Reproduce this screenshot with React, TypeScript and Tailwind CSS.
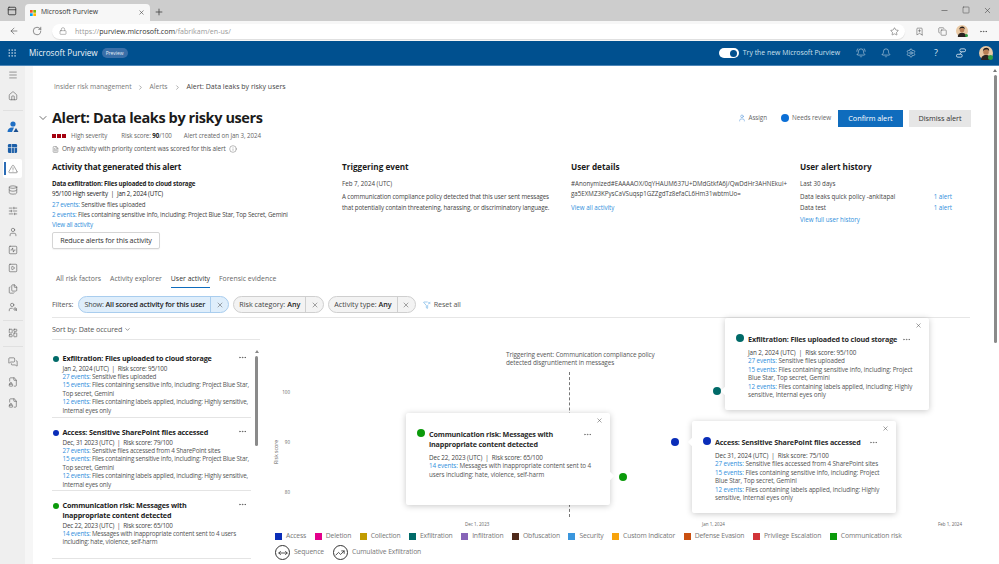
import React from 'react';
import {
  ArrowLeft, RotateCw, Lock, Plus, X, Minus, Square, Star, MoreHorizontal, Menu, Home,
  TriangleAlert, Database, SlidersHorizontal, User, SquareActivity, SquarePlay, Files, UserSearch, LayoutDashboard,
  MessagesSquare, FileLock2, ChevronDown, ChevronRight, Grip, BellRing, Bell, Settings,
  Info, FileText, FilterX, PanelTop, BookmarkPlus, Copy, MoveHorizontal, TrendingUp,
} from 'lucide-react';

const Avatar = ({ size, badge }: { size: string; badge: string }) => (
  <div className={`relative shrink-0 ${size}`}>
    <svg viewBox="0 0 20 20" className="w-full h-full">
      <circle cx="10" cy="10" r="10" fill="#e9c9a4" />
      <path d="M3 20c0-5 3-7 7-7s7 2 7 7z" fill="#2a2320" />
      <circle cx="10" cy="8.5" r="4" fill="#b97f55" />
      <path d="M5.500 8c0-4 2.500-5.500 5-5.500s4.500 1.500 4 5c-1-2-2-2.500-4.500-2.500s-3.500 1-4.500 3z" fill="#221a16" />
    </svg>
    <span className={`absolute right-0 bottom-0 rounded-full bg-[#2f9e44] ${badge}`} />
  </div>
);

const sideMid = [
  { Icon: Database, m: 'mt-[7px]' },
  { Icon: SlidersHorizontal, m: 'mt-[11px]' },
  { Icon: User, m: 'mt-[11px]' },
  { Icon: SquareActivity, m: 'mt-[8px]' },
  { Icon: SquarePlay, m: 'mt-[8px]' },
  { Icon: Files, m: 'mt-[11px]' },
  { Icon: UserSearch, m: 'mt-[8px]' },
];

const Sidebar = () => (
  <aside className="w-[25px] shrink-0 bg-[#efefef] flex flex-col items-center pt-[4px] text-[#555]">
    <Menu className="w-[10px] h-[10px]" strokeWidth={1.4} />
    <Home className="w-[10px] h-[10px] mt-[11px]" strokeWidth={1.4} />
    <div className="w-[20px] h-px bg-[#e0e0e0] mt-[9px]" />
    <svg viewBox="0 0 12 12" className="w-[12px] h-[12px] mt-[10px]">
      <circle cx="6" cy="3" r="2.600" fill="#1f6fc4" />
      <path d="M0.500 11c0-3 2-4.500 4.500-4.500h2l-2 4.500z" fill="#1f6fc4" />
      <path d="M6.500 11l2.500-4 2.500 4z" fill="#1a4f8f" />
    </svg>
    <svg viewBox="0 0 12 12" className="w-[11px] h-[11px] mt-[10px]">
      <rect x="1" y="1" width="10" height="10" rx="1.500" fill="#1a5ea8" />
      <path d="M5 1v10M1 5h10M8 5v6" stroke="#efefef" strokeWidth="0.700" />
    </svg>
    <div className="mt-[5px] w-[19px] h-[19px] bg-white rounded-[2px] relative flex items-center justify-center">
      <span className="absolute left-[1px] top-[3px] bottom-[3px] w-[1.500px] bg-[#2b6cb5]" />
      <TriangleAlert className="w-[10px] h-[10px]" strokeWidth={1.3} />
    </div>
    {sideMid.map(({ Icon, m }, i) => (
      <Icon key={i} className={`w-[10px] h-[10px] ${m}`} strokeWidth={1.4} />
    ))}
    <div className="w-[20px] h-px bg-[#e0e0e0] mt-[8px]" />
    <LayoutDashboard className="w-[10px] h-[10px] mt-[7px]" strokeWidth={1.4} />
    <div className="w-[20px] h-px bg-[#e0e0e0] mt-[8px]" />
    <MessagesSquare className="w-[10px] h-[10px] mt-[10px]" strokeWidth={1.4} />
    <FileLock2 className="w-[10px] h-[10px] mt-[10px]" strokeWidth={1.4} />
    <FileLock2 className="w-[10px] h-[10px] mt-[11px]" strokeWidth={1.4} />
  </aside>
);

const Ev = ({ n }: { n: number }) => <span className="text-[#2f8fdc]">{n} events: </span>;

const Pill = ({ label, value, active }: { label: string; value: string; active?: boolean }) => (
  <div className={`h-[17px] flex items-center rounded-full border text-[7.200px] ${active ? 'tracking-[-0.150px] bg-[#dfeefb] border-[#a9cdee]' : 'tracking-normal bg-[#f3f3f3] border-[#cfcfcf]'}`}>
    <span className="pl-[5px] pr-[5px] text-[#444] whitespace-nowrap">{label} <b className="font-semibold text-[#222]">{value}</b></span>
    <span className={`h-full w-[18px] flex items-center justify-center border-l ${active ? 'border-[#a9cdee]' : 'border-[#cfcfcf]'}`}>
      <X className="w-[8px] h-[8px] text-[#444]" strokeWidth={1.4} />
    </span>
  </div>
);

const items = [
  {
    dot: 'bg-[#006a68]', title: ['Exfiltration: Files uploaded to cloud storage'], meta: 'Jan 2, 2024 (UTC)  |  Risk score: 95/100',
    rows: [[27, 'Sensitive files uploaded'], [15, 'Files containing sensitive info, including: Project Blue Star, Top secret, Gemini'], [12, 'Files containing labels applied, including: Highly sensitive, Internal eyes only']],
  },
  {
    dot: 'bg-[#0a2db8]', title: ['Access: Sensitive SharePoint files accessed'], meta: 'Dec, 31 2023 (UTC)  |  Risk score: 79/100',
    rows: [[27, 'Sensitive files accessed from 4 SharePoint sites'], [15, 'Files containing sensitive info, including: Project Blue Star, Top secret, Gemini'], [12, 'Files containing labels applied, including: Highly sensitive, Internal eyes only']],
  },
  {
    dot: 'bg-[#0b9a0b]', title: ['Communication risk: Messages with', 'inappropriate content detected'], meta: 'Dec 22, 2023 (UTC)  |  Risk score: 65/100',
    rows: [[14, 'Messages with inappropriate content sent to 4 users including: hate, violence, self-harm']],
  },
] as const;

const ListItem = ({ item, h }: { item: (typeof items)[number]; h: string }) => (
  <div className={`flex border-b border-[#e4e4e4] pt-[3px] ${h}`}>
    <span className={`w-[6px] h-[6px] rounded-full mt-[3px] ml-[1px] mr-[3.500px] shrink-0 ${item.dot}`} />
    <div className="flex-1 min-w-0">
      <div className="flex justify-between">
        <div className="text-[7.200px] tracking-[-0.150px] leading-[10px] font-bold text-[#1b1b1b] whitespace-nowrap">
          {item.title.map((t) => <div key={t}>{t}</div>)}
        </div>
        <MoreHorizontal className="w-[9px] h-[9px] mr-[4px] text-[#444] shrink-0" strokeWidth={1.5} />
      </div>
      <div className="text-[6.300px] tracking-[-0.190px] leading-[8.400px] text-[#555] mt-[1.500px]">
        <div className="text-[#444] whitespace-pre">{item.meta}</div>
        {item.rows.map(([n, t]) => <div key={n}><Ev n={n} />{t}</div>)}
      </div>
    </div>
  </div>
);

const Popover = ({ pos, item, meta, arrow }: { pos: string; item: (typeof items)[number]; meta: string; arrow: string }) => (
  <div className={`absolute w-[204px] h-[92px] bg-white rounded-[2px] shadow-[0_1px_6px_rgba(0,0,0,0.22)] ${pos}`}>
    <span className={`absolute w-[6px] h-[6px] bg-white rotate-45 ${arrow}`} />
    <X className="absolute right-[7px] top-[4px] w-[7px] h-[7px] text-[#444]" strokeWidth={1.6} />
    <span className={`absolute left-[11px] top-[16px] w-[8px] h-[8px] rounded-full ${item.dot}`} />
    <MoreHorizontal className="absolute right-[18px] top-[17px] w-[9px] h-[9px] text-[#555]" strokeWidth={1.4} />
    <div className="absolute left-[23px] top-[16px] right-[10px]">
      <div className="text-[7.200px] tracking-[-0.150px] leading-[10px] font-bold text-[#2a2a2a] whitespace-nowrap">
        {item.title.map((t) => <div key={t}>{t}</div>)}
      </div>
      <div className="text-[6.300px] tracking-[-0.100px] leading-[8.400px] text-[#555] mt-[5px]">
        <div className="whitespace-pre text-[#444]">{meta}</div>
        {item.rows.map(([n, t]) => <div key={n}><Ev n={n} />{t}</div>)}
      </div>
    </div>
  </div>
);

const legend = [
  ['Access', 'bg-[#0a2db8]'], ['Deletion', 'bg-[#e3008c]'], ['Collection', 'bg-[#c19c00]'], ['Exfiltration', 'bg-[#006a68]'],
  ['Infiltration', 'bg-[#8764b8]'], ['Obfuscation', 'bg-[#4f2a1a]'], ['Security', 'bg-[#3a96dd]'], ['Custom Indicator', 'bg-[#f7a30c]'],
  ['Defense Evasion', 'bg-[#ca5010]'], ['Privilege Escalation', 'bg-[#d13438]'], ['Communication risk', 'bg-[#0b9a0b]'],
];

const Chart = () => (
  <div className="relative flex-1 h-full">
    {/* canvas origin: x 262, y 319 */}
    <span className="absolute left-[3px] top-[130px] text-[5.200px] text-[#555] -rotate-90 origin-center whitespace-nowrap">Risk score</span>
    {[['100', 'top-[71px]'], ['90', 'top-[121px]'], ['80', 'top-[171px]']].map(([t, p]) => (
      <span key={t} className={`absolute left-[18px] w-[10px] text-right text-[4.500px] leading-[6px] text-[#666] ${p}`}>{t}</span>
    ))}
    <div className="absolute left-[244px] top-[33px] text-[6.400px] tracking-[-0.100px] leading-[8.400px] text-[#555] whitespace-nowrap">
      <div>Triggering event: Communication compliance policy</div>
      <div>detected disgruntlement in messages</div>
    </div>
    <div className="absolute left-[307px] top-[54px] h-[145px] border-l border-dashed border-[#777]" />
    <span className="absolute left-[451px] top-[69px] w-[8px] h-[8px] rounded-full bg-[#006a68]" />
    <span className="absolute left-[409px] top-[120px] w-[8px] h-[8px] rounded-full bg-[#0a2db8]" />
    <span className="absolute left-[357px] top-[155px] w-[8px] h-[8px] rounded-full bg-[#0b9a0b]" />
    {[['Dec 1, 2023', 'left-[203px]'], ['Jan 1, 2024', 'left-[440px]'], ['Feb 1, 2024', 'left-[676px]']].map(([t, p]) => (
      <span key={t} className={`absolute top-[203px] text-[4.500px] leading-[6px] text-[#666] whitespace-nowrap ${p}`}>{t}</span>
    ))}
    <Popover pos="left-[144px] top-[95px]" item={items[2]} meta="Dec 22, 2023 (UTC)  |  Risk score: 65/100" arrow="-right-[3px] top-[60px]" />
    <Popover pos="left-[463px] top-[0px]" item={items[0]} meta="Jan 2, 2024 (UTC)  |  Risk score: 95/100" arrow="-left-[3px] top-[70px]" />
    <Popover pos="left-[430px] top-[103px]" item={items[1]} meta="Dec 31, 2024 (UTC)  |  Risk score: 75/100" arrow="-left-[3px] top-[18px]" />
    <div className="absolute left-[13px] top-[213px] flex gap-[8.500px] text-[6.800px] tracking-[-0.150px] leading-[10px] text-[#777] whitespace-nowrap">
      {legend.map(([t, c]) => (
        <div key={t} className="flex items-center gap-[4px]">
          <span className={`w-[7px] h-[7px] ${c}`} />{t}
        </div>
      ))}
    </div>
    <div className="absolute left-[13px] top-[227px] flex items-center text-[6.800px] tracking-[-0.120px] text-[#777] whitespace-nowrap">
      <span className="w-[15px] h-[15px] rounded-full border-[1.500px] border-[#333] flex items-center justify-center mr-[4px]"><MoveHorizontal className="w-[10px] h-[10px] text-[#333]" /></span>
      Sequence
      <span className="w-[15px] h-[15px] rounded-full border-[1.500px] border-[#333] flex items-center justify-center ml-[9px] mr-[4px]"><TrendingUp className="w-[10px] h-[10px] text-[#333]" /></span>
      Cumulative Exfiltration
    </div>
  </div>
);

export default function App() {
  return (
    <div className="w-[999px] h-[564px] overflow-hidden flex flex-col bg-white font-['Open_Sans',sans-serif]">
      {/* Browser chrome */}
      <div className="h-[21px] bg-[#cdcdcd] flex items-end pl-[7px] shrink-0">
        <PanelTop className="w-[10px] h-[10px] mb-[5px] text-[#333]" />
        <div className="ml-[8px] w-[125px] h-[17px] bg-[#f7f7f7] rounded-t-[4px] flex items-center pl-[5px] pr-[5px]">
          <svg viewBox="0 0 10 10" className="w-[6px] h-[6px] mr-[5px]">
            <rect width="4.500" height="4.500" fill="#f25022" /><rect x="5.500" width="4.500" height="4.500" fill="#7fba00" />
            <rect y="5.500" width="4.500" height="4.500" fill="#00a4ef" /><rect x="5.500" y="5.500" width="4.500" height="4.500" fill="#ffb900" />
          </svg>
          <span className="text-[6.800px] text-[#333]">Microsoft Purview</span>
          <X className="w-[7px] h-[7px] ml-auto text-[#444]" />
        </div>
        <Plus className="w-[10px] h-[10px] ml-[4px] mb-[4px] text-[#444]" />
        <div className="ml-auto flex gap-[13px] mb-[6px] mr-[7px] text-[#444]">
          <Minus className="w-[9px] h-[9px]" strokeWidth={1.5} />
          <Square className="w-[8px] h-[8px]" strokeWidth={1.5} />
          <X className="w-[9px] h-[9px]" strokeWidth={1.5} />
        </div>
      </div>
      <div className="h-[20px] bg-[#f7f7f7] flex items-center pl-[9px] pr-[8px] text-[#444] shrink-0">
        <ArrowLeft className="w-[10px] h-[10px]" strokeWidth={1.4} />
        <RotateCw className="w-[10px] h-[10px] ml-[13px]" strokeWidth={1.4} />
        <div className="ml-[10px] w-[853px] h-[15px] bg-white rounded-full flex items-center pl-[7px] pr-[6px] shadow-[0_1px_1px_rgba(0,0,0,0.1)]">
          <Lock className="w-[8px] h-[8px] text-[#777]" strokeWidth={1.5} />
          <span className="ml-[8px] text-[7.100px] text-[#999]">https://<b className="font-medium text-[#333]">purview.microsoft.com</b>/fabrikam/en-us/</span>
          <Star className="w-[9px] h-[9px] ml-auto" strokeWidth={1.3} />
        </div>
        <BookmarkPlus className="w-[9px] h-[9px] ml-[10px]" strokeWidth={1.3} />
        <Copy className="w-[9px] h-[9px] ml-[14px]" strokeWidth={1.3} />
        <Avatar size="w-[12px] h-[12px] ml-[9px]" badge="w-[3px] h-[3px]" />
        <MoreHorizontal className="w-[9px] h-[9px] ml-[11px]" strokeWidth={1.6} />
      </div>
      {/* Purview header */}
      <div className="h-[25px] bg-[#00508f] border-b border-[#4d86b8] flex items-center pl-[7px] pr-[6px] text-white shrink-0">
        <Grip className="w-[10px] h-[10px] text-[#d5e3ef]" strokeWidth={1.4} />
        <span className="ml-[12px] text-[8.200px] font-medium text-[#eef4f9]">Microsoft Purview</span>
        <span className="ml-[4px] px-[4px] h-[10px] rounded-full bg-[#3a6fa8] text-[4.900px] leading-[10px] text-[#e5eef6]">Preview</span>
        <div className="ml-auto w-[20px] h-[10px] bg-white rounded-full flex items-center justify-end pr-[1.500px]">
          <span className="w-[7px] h-[7px] rounded-full bg-[#00508f]" />
        </div>
        <span className="ml-[4px] text-[6.900px] text-[#cfe0ee]">Try the new Microsoft Purview</span>
        <div className="ml-[16px] flex items-center gap-[15px] text-[#dbe7f1]">
          <BellRing className="w-[10px] h-[10px]" strokeWidth={1.3} />
          <Bell className="w-[10px] h-[10px]" strokeWidth={1.3} />
          <Settings className="w-[10px] h-[10px]" strokeWidth={1.3} />
          <span className="w-[10px] text-center text-[9px] leading-[10px]">?</span>
          <svg viewBox="0 0 12 12" className="w-[10px] h-[10px]" fill="none" stroke="currentColor" strokeWidth="1">
            <rect x="4.500" y="1" width="7" height="3.500" rx="1.750" />
            <rect x="0.500" y="7.500" width="7" height="3.500" rx="1.750" />
            <path d="M7 4.500l-2.500 3" />
          </svg>
        </div>
        <Avatar size="w-[14px] h-[14px] ml-[13px]" badge="w-[5px] h-[5px]" />
      </div>

      <div className="flex-1 flex min-h-0 bg-[#f6f6f6]">
        <Sidebar />
        <main className="ml-[8px] flex-1 min-w-0 bg-white pl-[19px] relative overflow-hidden">
          {/* page scrollbar */}
          <div className="absolute right-[2px] top-[3px] bottom-[1px] w-[4px] flex flex-col items-center">
            <span className="w-0 h-0 border-x-[2px] border-x-transparent border-b-[3px] border-b-[#777]" />
            <span className="mt-[3px] w-[3px] h-[268px] bg-[#8a8a8a] rounded-full" />
          </div>

          <div className="flex items-center h-[10px] mt-[16px] text-[6.700px] text-[#777]">
            <span className="ml-[2px]">Insider risk management</span>
            <ChevronRight className="w-[7px] h-[7px] mx-[5px]" />
            <span className="ml-[1px]">Alerts</span>
            <ChevronRight className="w-[7px] h-[7px] mx-[6px]" />
            <span className="text-[#444] font-medium text-[7px]">Alert: Data leaks by risky users</span>
          </div>

          <div className="flex items-center h-[20px] mt-[16px] pr-[28px] relative">
            <ChevronDown className="absolute -left-[15px] w-[12px] h-[12px] text-[#333]" strokeWidth={1.4} />
            <h1 className="text-[14.500px] tracking-[-0.400px] leading-[20px] font-bold text-[#1b1b1b]">Alert: Data leaks by risky users</h1>
            <div className="ml-auto flex items-center text-[6.300px] tracking-[-0.050px] text-[#666]">
              <User className="w-[8px] h-[8px] text-[#4a8fd6]" strokeWidth={1.5} />
              <span className="ml-[2px]">Assign</span>
              <span className="ml-[14px] w-[8px] h-[8px] rounded-full bg-[#0b6fd6]" />
              <span className="ml-[3px]">Needs review</span>
              <button className="ml-[7px] w-[65px] h-[17px] bg-[#0f6cbd] text-white text-[7.300px]">Confirm alert</button>
              <button className="ml-[6px] w-[62px] h-[17px] bg-[#e6e6e6] text-[#333] text-[7.300px]">Dismiss alert</button>
            </div>
          </div>

          <div className="flex items-center mt-[3px] h-[10px] text-[6.200px] tracking-[-0.080px] text-[#666]">
            <span className="flex gap-[1px] mr-[5px]">
              <i className="w-[4px] h-[4px] bg-[#a4000f]" /><i className="w-[4px] h-[4px] bg-[#a4000f]" /><i className="w-[4px] h-[4px] bg-[#a4000f]" />
            </span>
            <span>High severity</span>
            <span className="ml-[14px]">Risk score: <b className="text-[#222]">90</b>/100</span>
            <span className="ml-[12px]">Alert created on Jan 3, 2024</span>
          </div>
          <div className="flex items-center mt-[3px] h-[10px] text-[6.400px] tracking-[-0.130px] text-[#555]">
            <FileText className="w-[7px] h-[7px] mr-[3px]" strokeWidth={1.4} />
            <span>Only activity with priority content was scored for this alert</span>
            <Info className="w-[8px] h-[8px] ml-[3px]" strokeWidth={1.2} />
          </div>

          {/* Summary columns */}
          <div className="grid grid-cols-[290px_229px_229px_1fr] mt-[7px] h-[83px] text-[6.200px] leading-[10.300px] text-[#444]">
            <div className="tracking-[-0.150px]">
              <h2 className="text-[8.200px] leading-[12px] font-bold text-[#1b1b1b] mb-[6px]">Activity that generated this alert</h2>
              <div className="font-bold text-[#222]">Data exfiltration: Files uploaded to cloud storage</div>
              <div className="font-medium text-[#222] whitespace-pre">95/100 High severity  |  Jan 2, 2024 (UTC)</div>
              <div><span className="text-[#2f8fdc]">27 events:</span> Sensitive files uploaded</div>
              <div><span className="text-[#2f8fdc]">2 events:</span> Files containing sensitive info, including: Project Blue Star, Top Secret, Gemini</div>
              <div className="text-[#2f8fdc]">View all activity</div>
              <button className="mt-[2px] w-[108px] h-[17px] border border-[#d5d5d5] rounded-[2px] text-[7.200px] leading-[15px] font-medium text-[#333] shadow-[0_1px_1px_rgba(0,0,0,0.05)]">Reduce alerts for this activity</button>
            </div>
            <div>
              <h2 className="text-[8.200px] leading-[12px] font-bold text-[#1b1b1b] mb-[6px]">Triggering event</h2>
              <div className="mb-[3px]">Feb 7, 2024 (UTC)</div>
              <div className="w-[210px] tracking-[-0.100px]">A communication compliance policy detected that this user sent messages that potentially contain threatening, harassing, or discriminatory language.</div>
            </div>
            <div>
              <h2 className="text-[8.200px] leading-[12px] font-bold text-[#1b1b1b] mb-[6px]">User details</h2>
              <div className="whitespace-nowrap">#Anonymized#EAAAAOX/0qYHAUM637U+DMdGtkfA6J/QwDdHr3AHNEkui+</div>
              <div className="whitespace-nowrap">ga5EXMZ3KPysCaVSuqsp1GZZgdTz8efaCL6Hm31wbtmUo=</div>
              <div className="text-[#2f8fdc] mt-[3px]">View all activity</div>
            </div>
            <div className="pr-[47px]">
              <h2 className="text-[8.200px] leading-[12px] font-bold text-[#1b1b1b] mb-[6px]">User alert history</h2>
              <div className="mb-[3px]">Last 30 days</div>
              <div className="flex justify-between"><span>Data leaks quick policy -ankitapal</span><span className="text-[#2f8fdc]">1 alert</span></div>
              <div className="flex justify-between"><span>Data test</span><span className="text-[#2f8fdc]">1 alert</span></div>
              <div className="text-[#2f8fdc] mt-[2px]">View full user history</div>
            </div>
          </div>

          {/* Tabs */}
          <div className="flex h-[16px] mt-[28px] pl-[4px] gap-[9px] text-[6.900px] leading-[14px] text-[#666]">
            <span>All risk factors</span>
            <span>Activity explorer</span>
            <span className="text-[#333] font-medium border-b-[1.500px] border-[#0f6cbd] h-[16px]">User activity</span>
            <span>Forensic evidence</span>
          </div>

          {/* Filters */}
          <div className="flex items-center h-[17px] mt-[8px] gap-[4px] text-[7.200px] tracking-[-0.100px] text-[#555]">
            <span className="mr-[1px]">Filters:</span>
            <Pill label="Show:" value="All scored activity for this user" active />
            <Pill label="Risk category:" value="Any" />
            <Pill label="Activity type:" value="Any" />
            <FilterX className="w-[8px] h-[8px] text-[#3a96dd] ml-[3px]" strokeWidth={1.4} />
            <span className="-ml-[1px]">Reset all</span>
          </div>
          <div className="w-[918px] h-px bg-[#e6e6e6] mt-[4px]" />

          <div className="flex h-[245px]">
            <div className="w-[210px] shrink-0">
              <div className="w-[208px] flex items-center h-[22px] pt-[2px] border-b border-[#e6e6e6] text-[7.200px] tracking-[-0.080px] text-[#555]">
                Sort by: Date occured <ChevronDown className="w-[7px] h-[7px] ml-[2px]" />
              </div>
              <div className="flex mt-[10px]">
                <div className="w-[199px]">
                  <ListItem item={items[0]} h="h-[68px]" />
                  <ListItem item={items[1]} h="h-[73px] pt-[9px]" />
                  <ListItem item={items[2]} h="h-[68px] pt-[9px]" />
                </div>
                <div className="ml-[3px] flex flex-col items-center w-[5px]">
                  <span className="w-0 h-0 border-x-[2px] border-x-transparent border-b-[3px] border-b-[#888]" />
                  <span className="mt-[3px] w-[3px] h-[90px] bg-[#8a8a8a] rounded-full" />
                </div>
              </div>
            </div>
            <Chart />
          </div>
        </main>
      </div>
    </div>
  );
}
